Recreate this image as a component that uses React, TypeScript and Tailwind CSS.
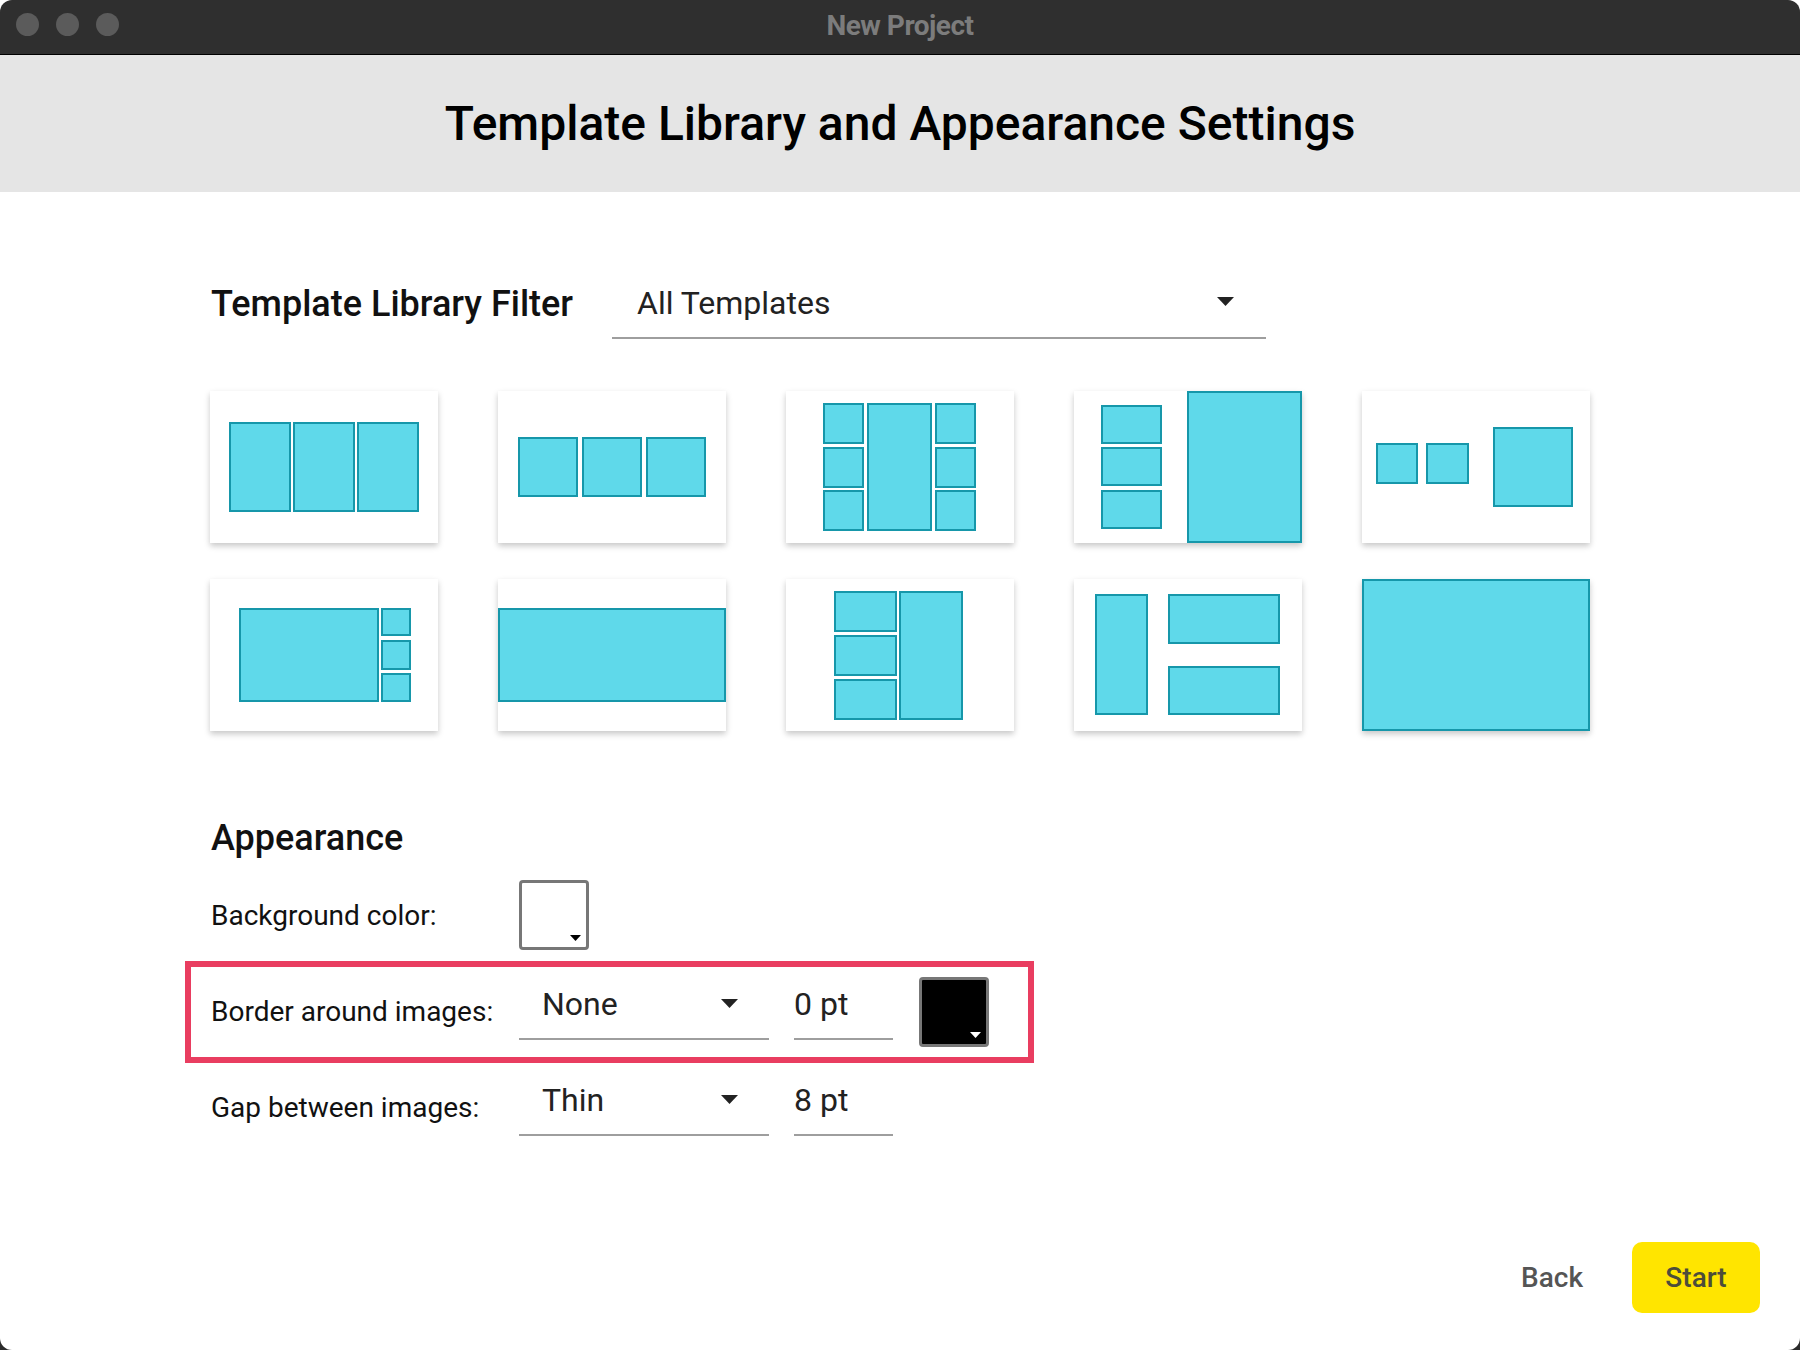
import type { ReactNode } from "react";

type Box = [number, number, number, number];

// Thumbnail layouts for the template library, in card pixels (228 x 152)
const templates: Box[][] = [
  [[20, 32, 60, 88], [84, 32, 60, 88], [148, 32, 60, 88]],
  [[21, 47, 58, 58], [85, 47, 58, 58], [149, 47, 58, 58]],
  [
    [38, 13, 39, 39], [38, 57, 39, 39], [38, 100, 39, 39],
    [82, 13, 63, 126],
    [150, 13, 39, 39], [150, 57, 39, 39], [150, 100, 39, 39],
  ],
  [[28, 15, 59, 37], [28, 57, 59, 37], [28, 100, 59, 37], [114, 1, 113, 150]],
  [[15, 53, 40, 39], [65, 53, 41, 39], [132, 37, 78, 78]],
  [[30, 30, 138, 92], [172, 30, 28, 26], [172, 62, 28, 28], [172, 95, 28, 27]],
  [[1, 30, 226, 92]],
  [[49, 13, 61, 39], [49, 57, 61, 39], [49, 101, 61, 39], [114, 13, 62, 127]],
  [[22, 16, 51, 119], [95, 16, 110, 48], [95, 88, 110, 47]],
  [[1, 1, 226, 150]],
];

function TemplateCard({ boxes }: { boxes: Box[] }) {
  return (
    <div className="w-[228px] h-[152px] bg-white shadow-[0_3px_6px_rgba(0,0,0,0.22)] cursor-pointer">
      <svg width="228" height="152" viewBox="0 0 228 152">
        {boxes.map(([x, y, w, h], i) => (
          <rect key={i} x={x} y={y} width={w} height={h} fill="#5fd9ea" stroke="#1697aa" strokeWidth="2" />
        ))}
      </svg>
    </div>
  );
}

function Caret({ className = "" }: { className?: string }) {
  return (
    <svg width="17" height="9" viewBox="0 0 17 9" className={className}>
      <path d="M0 0h17L8.5 9z" fill="#222" />
    </svg>
  );
}

function Select({ value }: { value: string }) {
  return (
    <div className="w-[250px] h-[56px] pb-[15px] flex items-center justify-between pl-[23px] pr-[31px] border-b-2 border-[#9e9e9e] text-[32px] text-[#222]">
      <span>{value}</span>
      <Caret />
    </div>
  );
}

function PointInput({ value }: { value: string }) {
  return (
    <div className="ml-[25px] w-[99px] h-[56px] pb-[15px] flex items-center border-b-2 border-[#9e9e9e] text-[32px] text-[#222]">
      {value}
    </div>
  );
}

function ColorSwatch({ dark = false }: { dark?: boolean }) {
  return (
    <div
      className={`relative w-[70px] h-[70px] rounded-[4px] border-[3px] border-[#777] ${dark ? "bg-black" : "bg-white"}`}
    >
      <svg width="11" height="6" viewBox="0 0 11 6" className="absolute right-[5px] bottom-[6px]">
        <path d="M0 0h11L5.5 6z" fill={dark ? "#fff" : "#000"} />
      </svg>
    </div>
  );
}

function SettingRow({ label, children }: { label: string; children: ReactNode }) {
  return (
    <div className="flex items-center h-[90px]">
      <div className="w-[308px] text-[28px] text-[#111]">{label}</div>
      <div className="flex items-center">{children}</div>
    </div>
  );
}

export default function App() {
  return (
    <div className="w-[1800px] h-[1350px] bg-[linear-gradient(to_bottom,#ffffff_50%,#2b2b2b_50%)] font-['Roboto',sans-serif]">
      <div className="w-full h-full flex flex-col rounded-[12px] overflow-hidden bg-white">
        {/* Title bar */}
        <div className="relative h-[55px] shrink-0 bg-[#2f2f2f] border-b border-black flex items-center justify-center">
          <div className="absolute left-[16px] top-[13px] flex gap-[17px]">
            <span className="w-[23px] h-[23px] rounded-full bg-[#5b5b5b]" />
            <span className="w-[23px] h-[23px] rounded-full bg-[#5b5b5b]" />
            <span className="w-[23px] h-[23px] rounded-full bg-[#5b5b5b]" />
          </div>
          <span className="text-[28px] font-bold text-[#7c7c7c] -mt-[2px] tracking-[-0.5px]">New Project</span>
        </div>

        {/* Page header */}
        <div className="h-[137px] shrink-0 bg-[#e5e5e5] flex items-center justify-center">
          <h1 className="text-[48px] font-medium text-black">Template Library and Appearance Settings</h1>
        </div>

        <div className="flex-1 flex flex-col pl-[210px]">
          {/* Library filter */}
          <div className="mt-[73px] flex items-center">
            <div className="w-[402px] pl-[1px] mt-[3px] text-[36px] font-medium text-[#111]">Template Library Filter</div>
            <div className="w-[654px] h-[74px] flex items-center justify-between pl-[25px] pr-[32px] border-b-2 border-[#9e9e9e]">
              <span className="text-[32px] text-[#222] mt-[3px]">All Templates</span>
              <Caret />
            </div>
          </div>

          {/* Templates */}
          <div className="mt-[52px] grid grid-cols-[repeat(5,228px)] gap-x-[60px] gap-y-[36px]">
            {templates.map((boxes, i) => (
              <TemplateCard key={i} boxes={boxes} />
            ))}
          </div>

          {/* Appearance */}
          <h2 className="mt-[86px] pl-[1px] text-[36px] leading-[42px] font-medium text-[#111]">Appearance</h2>

          <div className="mt-[20px] pl-[1px] flex items-center h-[71px]">
            <div className="w-[308px] text-[28px] text-[#111] mt-[2px]">Background color:</div>
            <ColorSwatch />
          </div>

          <div className="mt-[11px] -ml-[25px] w-[849px] h-[102px] pl-[20px] border-[6px] border-[#e93d60] flex items-center">
            <SettingRow label="Border around images:">
              <Select value="None" />
              <PointInput value="0 pt" />
              <div className="ml-[26px]">
                <ColorSwatch dark />
              </div>
            </SettingRow>
          </div>

          <div className="pl-[1px]">
            <SettingRow label="Gap between images:">
              <Select value="Thin" />
              <PointInput value="8 pt" />
            </SettingRow>
          </div>

          {/* Footer actions */}
          <div className="mt-auto mb-[37px] mr-[40px] flex justify-end items-center gap-[16px]">
            <button className="w-[128px] h-[71px] text-[28px] font-medium text-[#555]">Back</button>
            <button className="w-[128px] h-[71px] rounded-[10px] bg-[#ffe500] text-[28px] font-medium text-[#4d4d3a]">
              Start
            </button>
          </div>
        </div>
      </div>
    </div>
  );
}
